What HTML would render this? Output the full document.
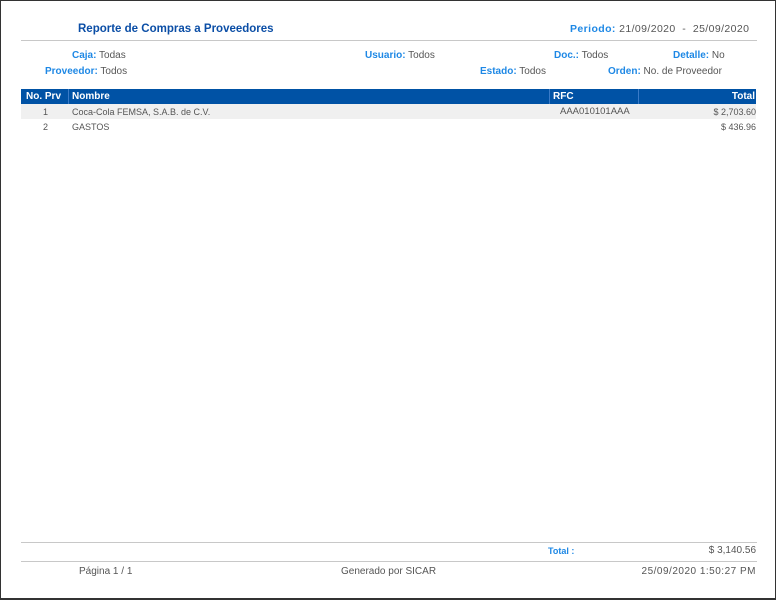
<!DOCTYPE html>
<html><head><meta charset="utf-8"><style>
*{margin:0;padding:0;box-sizing:border-box}
body{width:776px;height:600px;background:#fff;font-family:"Liberation Sans",sans-serif;font-size:10px;color:#555;position:relative;overflow:hidden}
.frame{position:absolute;left:0;top:0;width:776px;height:600px;border:1px solid #333;border-bottom-width:2px}
.a{position:absolute;white-space:nowrap;line-height:12px}
.b{color:#1e88e5;font-weight:bold}
.line{position:absolute;left:21px;width:736px;height:1px;background:#c8c8c8}
.hd{position:absolute;top:89px;height:15px;background:#0052a5;color:#fff;font-weight:bold;line-height:15px;padding:0 3px}
</style></head><body>
<div class="frame"></div>
<div class="a" style="left:78px;top:22px;font-size:11.5px;font-weight:bold;line-height:15px;color:#0b4ea6">Reporte de Compras a Proveedores</div>
<div class="a" style="left:570px;top:23px;font-size:10.5px;letter-spacing:0.4px"><span class="b">Periodo:</span> 21/09/2020 &nbsp;- &nbsp;25/09/2020</div>
<div class="line" style="top:40px"></div>
<div class="a" style="left:72px;top:50px"><span class="b">Caja:</span> Todas</div>
<div class="a" style="left:45px;top:66px"><span class="b">Proveedor:</span> Todos</div>
<div class="a" style="left:365px;top:50px"><span class="b">Usuario:</span> Todos</div>
<div class="a" style="left:554px;top:50px"><span class="b">Doc.:</span> Todos</div>
<div class="a" style="left:673px;top:50px"><span class="b">Detalle:</span> No</div>
<div class="a" style="left:480px;top:66px"><span class="b">Estado:</span> Todos</div>
<div class="a" style="left:608px;top:66px"><span class="b">Orden:</span> No. de Proveedor</div>
<div class="hd" style="left:21px;width:47px;padding-left:5px">No. Prv</div>
<div class="hd" style="left:68px;width:481px;border-left:1px solid #3a7bc8">Nombre</div>
<div class="hd" style="left:549px;width:89px;border-left:1px solid #3a7bc8">RFC</div>
<div class="hd" style="left:638px;width:118px;border-left:1px solid #3a7bc8;text-align:right;padding-right:1px">Total</div>
<div style="position:absolute;left:21px;top:104px;width:735px;height:15px;background:#f0f0f0"></div>
<div class="a" style="left:43px;top:106px;font-size:9px">1</div>
<div class="a" style="left:72px;top:106px;font-size:9px">Coca-Cola FEMSA, S.A.B. de C.V.</div>
<div class="a" style="left:560px;top:106px;font-size:9.5px">AAA010101AAA</div>
<div class="a" style="right:20px;top:106px;font-size:9px">$ 2,703.60</div>
<div class="a" style="left:43px;top:121px;font-size:9px">2</div>
<div class="a" style="left:72px;top:121px;font-size:9px">GASTOS</div>
<div class="a" style="right:20px;top:121px;font-size:9px">$ 436.96</div>
<div class="line" style="top:542px"></div>
<div class="a" style="left:548px;top:545px;font-size:9px"><span class="b">Total :</span></div>
<div class="a" style="right:20px;top:545px">$ 3,140.56</div>
<div class="line" style="top:561px"></div>
<div class="a" style="left:79px;top:566px">Página 1 / 1</div>
<div class="a" style="left:341px;top:566px">Generado por SICAR</div>
<div class="a" style="right:20px;top:566px;letter-spacing:0.5px">25/09/2020 1:50:27 PM</div>
</body></html>
